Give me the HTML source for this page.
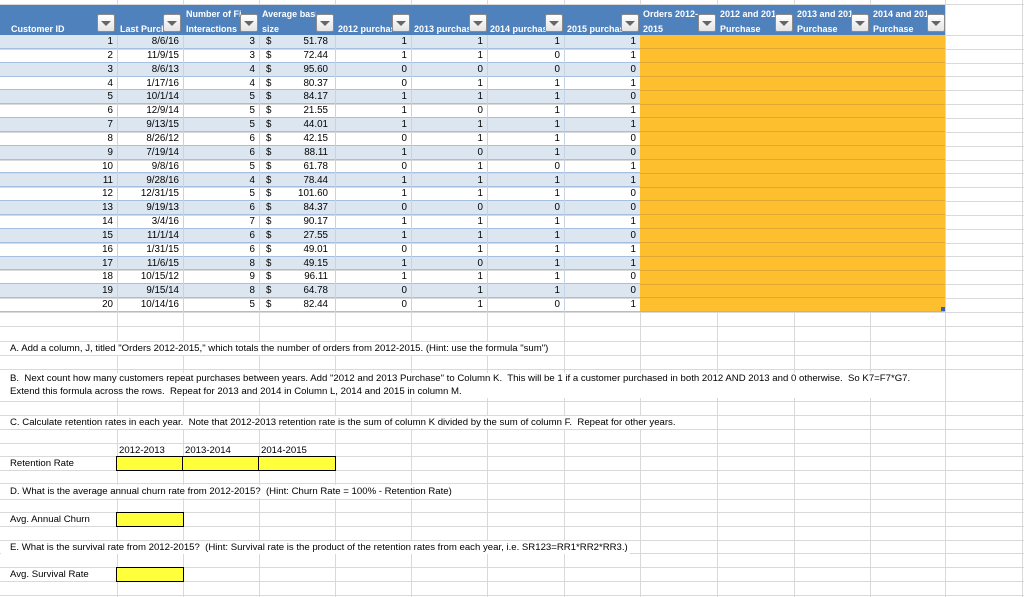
<!DOCTYPE html>
<html><head><meta charset="utf-8"><style>
*{margin:0;padding:0;box-sizing:border-box}
body{width:1024px;height:597px;overflow:hidden;background:#fff;font-family:"Liberation Sans",sans-serif;position:relative}
.v{position:absolute;top:0;width:1px;height:597px;background:#d9d9d9;z-index:1}
.h{position:absolute;left:0;width:1024px;height:1px;background:#d9d9d9;z-index:1}
.hd{position:absolute;left:0;top:5px;width:945px;height:30px;background:#4f81bd;z-index:3}
.ht{position:absolute;color:#fff;font-weight:bold;font-size:9px;line-height:15px;white-space:nowrap;overflow:hidden;z-index:4}
.bt{position:absolute;top:14px;width:18px;height:18px;background:linear-gradient(#fff,#e4e4e4);border:1px solid #8a8a8a;border-radius:2px;z-index:5}
.bt:after{content:"";position:absolute;left:3px;top:6px;border-left:5px solid transparent;border-right:5px solid transparent;border-top:5px solid #666}
.r{position:absolute;left:0;width:945px;height:13.85px;border-bottom:1px solid #a7bfde;z-index:2;font-size:9.8px;line-height:13px;color:#000}
.r.o{background:#dce6f1}
.r i{position:absolute;font-style:normal;text-align:right;top:0}
.r i:nth-child(1){left:0;width:113px}
.r i:nth-child(2){left:117px;width:62px}
.r i:nth-child(3){left:183px;width:72px}
.r i:nth-child(4){left:266px;width:6px;text-align:left}
.r i:nth-child(5){left:259px;width:69px}
.r i:nth-child(6){left:335px;width:72px}
.r i:nth-child(7){left:411px;width:72px}
.r i:nth-child(8){left:487px;width:73px}
.r i:nth-child(9){left:564px;width:72px}
.dv{position:absolute;top:35px;width:1px;height:277px;background:#c6d3e3;z-index:2}
.or{position:absolute;left:640px;top:35px;width:305px;height:277px;background:#fdbf2d;z-index:3}
.ol{position:absolute;left:640px;width:305px;height:1px;background:#e0a830;z-index:4}
.t{position:absolute;left:1px;padding-left:9px;font-size:9.6px;line-height:13px;background:#fff;z-index:3;white-space:nowrap;color:#000}
.y{position:absolute;background:#ffff3c;border:1.5px solid #000;z-index:4}
</style></head><body>
<div class="v" style="left:117px"></div><div class="v" style="left:183px"></div><div class="v" style="left:259px"></div><div class="v" style="left:335px"></div><div class="v" style="left:411px"></div><div class="v" style="left:487px"></div><div class="v" style="left:564px"></div><div class="v" style="left:640px"></div><div class="v" style="left:717px"></div><div class="v" style="left:794px"></div><div class="v" style="left:870px"></div><div class="v" style="left:945px"></div><div class="v" style="left:1022px"></div>
<div class="h" style="top:4px"></div><div class="h" style="top:35px"></div><div class="h" style="top:49px"></div><div class="h" style="top:63px"></div><div class="h" style="top:76px"></div><div class="h" style="top:90px"></div><div class="h" style="top:104px"></div><div class="h" style="top:118px"></div><div class="h" style="top:132px"></div><div class="h" style="top:146px"></div><div class="h" style="top:160px"></div><div class="h" style="top:173px"></div><div class="h" style="top:187px"></div><div class="h" style="top:201px"></div><div class="h" style="top:215px"></div><div class="h" style="top:229px"></div><div class="h" style="top:243px"></div><div class="h" style="top:256px"></div><div class="h" style="top:270px"></div><div class="h" style="top:284px"></div><div class="h" style="top:298px"></div><div class="h" style="top:312px"></div><div class="h" style="top:326px"></div><div class="h" style="top:341px"></div><div class="h" style="top:355px"></div><div class="h" style="top:369px"></div><div class="h" style="top:401px"></div><div class="h" style="top:415px"></div><div class="h" style="top:429px"></div><div class="h" style="top:443px"></div><div class="h" style="top:456px"></div><div class="h" style="top:470px"></div><div class="h" style="top:483px"></div><div class="h" style="top:499px"></div><div class="h" style="top:512px"></div><div class="h" style="top:526px"></div><div class="h" style="top:540px"></div><div class="h" style="top:553px"></div><div class="h" style="top:567px"></div><div class="h" style="top:581px"></div><div class="h" style="top:595px"></div>

<div class="hd"></div>
<div class="ht" style="left:11px;top:22px;width:85px">Customer ID</div>
<div class="ht" style="left:120px;top:22px;width:45px">Last Purchase</div>
<div class="ht" style="left:186px;top:7px;width:56px">Number of Firm<br>Interactions</div>
<div class="ht" style="left:262px;top:7px;width:54px">Average basket<br>size</div>
<div class="ht" style="left:338px;top:22px;width:54px">2012 purchase</div>
<div class="ht" style="left:414px;top:22px;width:55px">2013 purchase</div>
<div class="ht" style="left:490px;top:22px;width:56px">2014 purchase</div>
<div class="ht" style="left:567px;top:22px;width:55px">2015 purchase</div>
<div class="ht" style="left:643px;top:7px;width:55px">Orders 2012-<br>2015</div>
<div class="ht" style="left:720px;top:7px;width:55px">2012 and 2013<br>Purchase</div>
<div class="ht" style="left:797px;top:7px;width:55px">2013 and 2014<br>Purchase</div>
<div class="ht" style="left:873px;top:7px;width:54px">2014 and 2015<br>Purchase</div>
<div class="bt" style="left:97px"></div><div class="bt" style="left:163px"></div><div class="bt" style="left:240px"></div><div class="bt" style="left:316px"></div><div class="bt" style="left:392px"></div><div class="bt" style="left:469px"></div><div class="bt" style="left:545px"></div><div class="bt" style="left:621px"></div><div class="bt" style="left:698px"></div><div class="bt" style="left:775px"></div><div class="bt" style="left:851px"></div><div class="bt" style="left:927px"></div>

<div class="r o" style="top:35px"><i>1</i><i>8/6/16</i><i>3</i><i>$</i><i>51.78</i><i>1</i><i>1</i><i>1</i><i>1</i></div>
<div class="r" style="top:48.85px"><i>2</i><i>11/9/15</i><i>3</i><i>$</i><i>72.44</i><i>1</i><i>1</i><i>0</i><i>1</i></div>
<div class="r o" style="top:62.7px"><i>3</i><i>8/6/13</i><i>4</i><i>$</i><i>95.60</i><i>0</i><i>0</i><i>0</i><i>0</i></div>
<div class="r" style="top:76.55px"><i>4</i><i>1/17/16</i><i>4</i><i>$</i><i>80.37</i><i>0</i><i>1</i><i>1</i><i>1</i></div>
<div class="r o" style="top:90.4px"><i>5</i><i>10/1/14</i><i>5</i><i>$</i><i>84.17</i><i>1</i><i>1</i><i>1</i><i>0</i></div>
<div class="r" style="top:104.25px"><i>6</i><i>12/9/14</i><i>5</i><i>$</i><i>21.55</i><i>1</i><i>0</i><i>1</i><i>1</i></div>
<div class="r o" style="top:118.1px"><i>7</i><i>9/13/15</i><i>5</i><i>$</i><i>44.01</i><i>1</i><i>1</i><i>1</i><i>1</i></div>
<div class="r" style="top:131.95px"><i>8</i><i>8/26/12</i><i>6</i><i>$</i><i>42.15</i><i>0</i><i>1</i><i>1</i><i>0</i></div>
<div class="r o" style="top:145.8px"><i>9</i><i>7/19/14</i><i>6</i><i>$</i><i>88.11</i><i>1</i><i>0</i><i>1</i><i>0</i></div>
<div class="r" style="top:159.65px"><i>10</i><i>9/8/16</i><i>5</i><i>$</i><i>61.78</i><i>0</i><i>1</i><i>0</i><i>1</i></div>
<div class="r o" style="top:173.5px"><i>11</i><i>9/28/16</i><i>4</i><i>$</i><i>78.44</i><i>1</i><i>1</i><i>1</i><i>1</i></div>
<div class="r" style="top:187.35px"><i>12</i><i>12/31/15</i><i>5</i><i>$</i><i>101.60</i><i>1</i><i>1</i><i>1</i><i>0</i></div>
<div class="r o" style="top:201.2px"><i>13</i><i>9/19/13</i><i>6</i><i>$</i><i>84.37</i><i>0</i><i>0</i><i>0</i><i>0</i></div>
<div class="r" style="top:215.05px"><i>14</i><i>3/4/16</i><i>7</i><i>$</i><i>90.17</i><i>1</i><i>1</i><i>1</i><i>1</i></div>
<div class="r o" style="top:228.9px"><i>15</i><i>11/1/14</i><i>6</i><i>$</i><i>27.55</i><i>1</i><i>1</i><i>1</i><i>0</i></div>
<div class="r" style="top:242.75px"><i>16</i><i>1/31/15</i><i>6</i><i>$</i><i>49.01</i><i>0</i><i>1</i><i>1</i><i>1</i></div>
<div class="r o" style="top:256.6px"><i>17</i><i>11/6/15</i><i>8</i><i>$</i><i>49.15</i><i>1</i><i>0</i><i>1</i><i>1</i></div>
<div class="r" style="top:270.45px"><i>18</i><i>10/15/12</i><i>9</i><i>$</i><i>96.11</i><i>1</i><i>1</i><i>1</i><i>0</i></div>
<div class="r o" style="top:284.3px"><i>19</i><i>9/15/14</i><i>8</i><i>$</i><i>64.78</i><i>0</i><i>1</i><i>1</i><i>0</i></div>
<div class="r" style="top:298.15px"><i>20</i><i>10/14/16</i><i>5</i><i>$</i><i>82.44</i><i>0</i><i>1</i><i>0</i><i>1</i></div>
<div class="dv" style="left:117px"></div><div class="dv" style="left:183px"></div><div class="dv" style="left:259px"></div><div class="dv" style="left:335px"></div><div class="dv" style="left:411px"></div><div class="dv" style="left:487px"></div><div class="dv" style="left:564px"></div>
<div class="or"></div>
<div class="ol" style="top:48px"></div><div class="ol" style="top:62px"></div><div class="ol" style="top:76px"></div><div class="ol" style="top:90px"></div><div class="ol" style="top:104px"></div><div class="ol" style="top:117px"></div><div class="ol" style="top:131px"></div><div class="ol" style="top:145px"></div><div class="ol" style="top:159px"></div><div class="ol" style="top:173px"></div><div class="ol" style="top:187px"></div><div class="ol" style="top:200px"></div><div class="ol" style="top:214px"></div><div class="ol" style="top:228px"></div><div class="ol" style="top:242px"></div><div class="ol" style="top:256px"></div><div class="ol" style="top:270px"></div><div class="ol" style="top:284px"></div><div class="ol" style="top:297px"></div><div class="ol" style="top:311px;background:#9db5d8"></div>
<div style="position:absolute;left:941px;top:307px;width:4px;height:4px;background:#3b5fb0;z-index:5"></div>

<div class="t" style="top:342px">A. Add a column, J, titled "Orders 2012-2015," which totals the number of orders from 2012-2015. (Hint: use the formula "sum")&nbsp;</div>
<div class="t" style="top:373px;line-height:12.5px">B.&nbsp; Next count how many customers repeat purchases between years. Add "2012 and 2013 Purchase" to Column K.&nbsp; This will be 1 if a customer purchased in both 2012 AND 2013 and 0 otherwise.&nbsp; So K7=F7*G7.<br>Extend this formula across the rows.&nbsp; Repeat for 2013 and 2014 in Column L, 2014 and 2015 in column M.</div>
<div class="t" style="top:416px">C. Calculate retention rates in each year.&nbsp; Note that 2012-2013 retention rate is the sum of column K divided by the sum of column F.&nbsp; Repeat for other years.</div>
<div class="t" style="top:444px;left:117px;padding-left:2px;background:none">2012-2013</div>
<div class="t" style="top:444px;left:183px;padding-left:2px;background:none">2013-2014</div>
<div class="t" style="top:444px;left:259px;padding-left:2px;background:none">2014-2015</div>
<div class="t" style="top:457px;background:none">Retention Rate</div>
<div class="y" style="left:116px;top:456px;width:68px;height:15px"></div>
<div class="y" style="left:182px;top:456px;width:78px;height:15px"></div>
<div class="y" style="left:258px;top:456px;width:78px;height:15px"></div>
<div class="t" style="top:485px">D. What is the average annual churn rate from 2012-2015?&nbsp; (Hint: Churn Rate = 100% - Retention Rate)&nbsp;</div>
<div class="t" style="top:513px;background:none">Avg. Annual Churn</div>
<div class="y" style="left:116px;top:512px;width:68px;height:15px"></div>
<div class="t" style="top:541px">E. What is the survival rate from 2012-2015?&nbsp; (Hint: Survival rate is the product of the retention rates from each year, i.e. SR123=RR1*RR2*RR3.)&nbsp;</div>
<div class="t" style="top:568px;background:none">Avg. Survival Rate</div>
<div class="y" style="left:116px;top:567px;width:68px;height:15px"></div>
</body></html>
